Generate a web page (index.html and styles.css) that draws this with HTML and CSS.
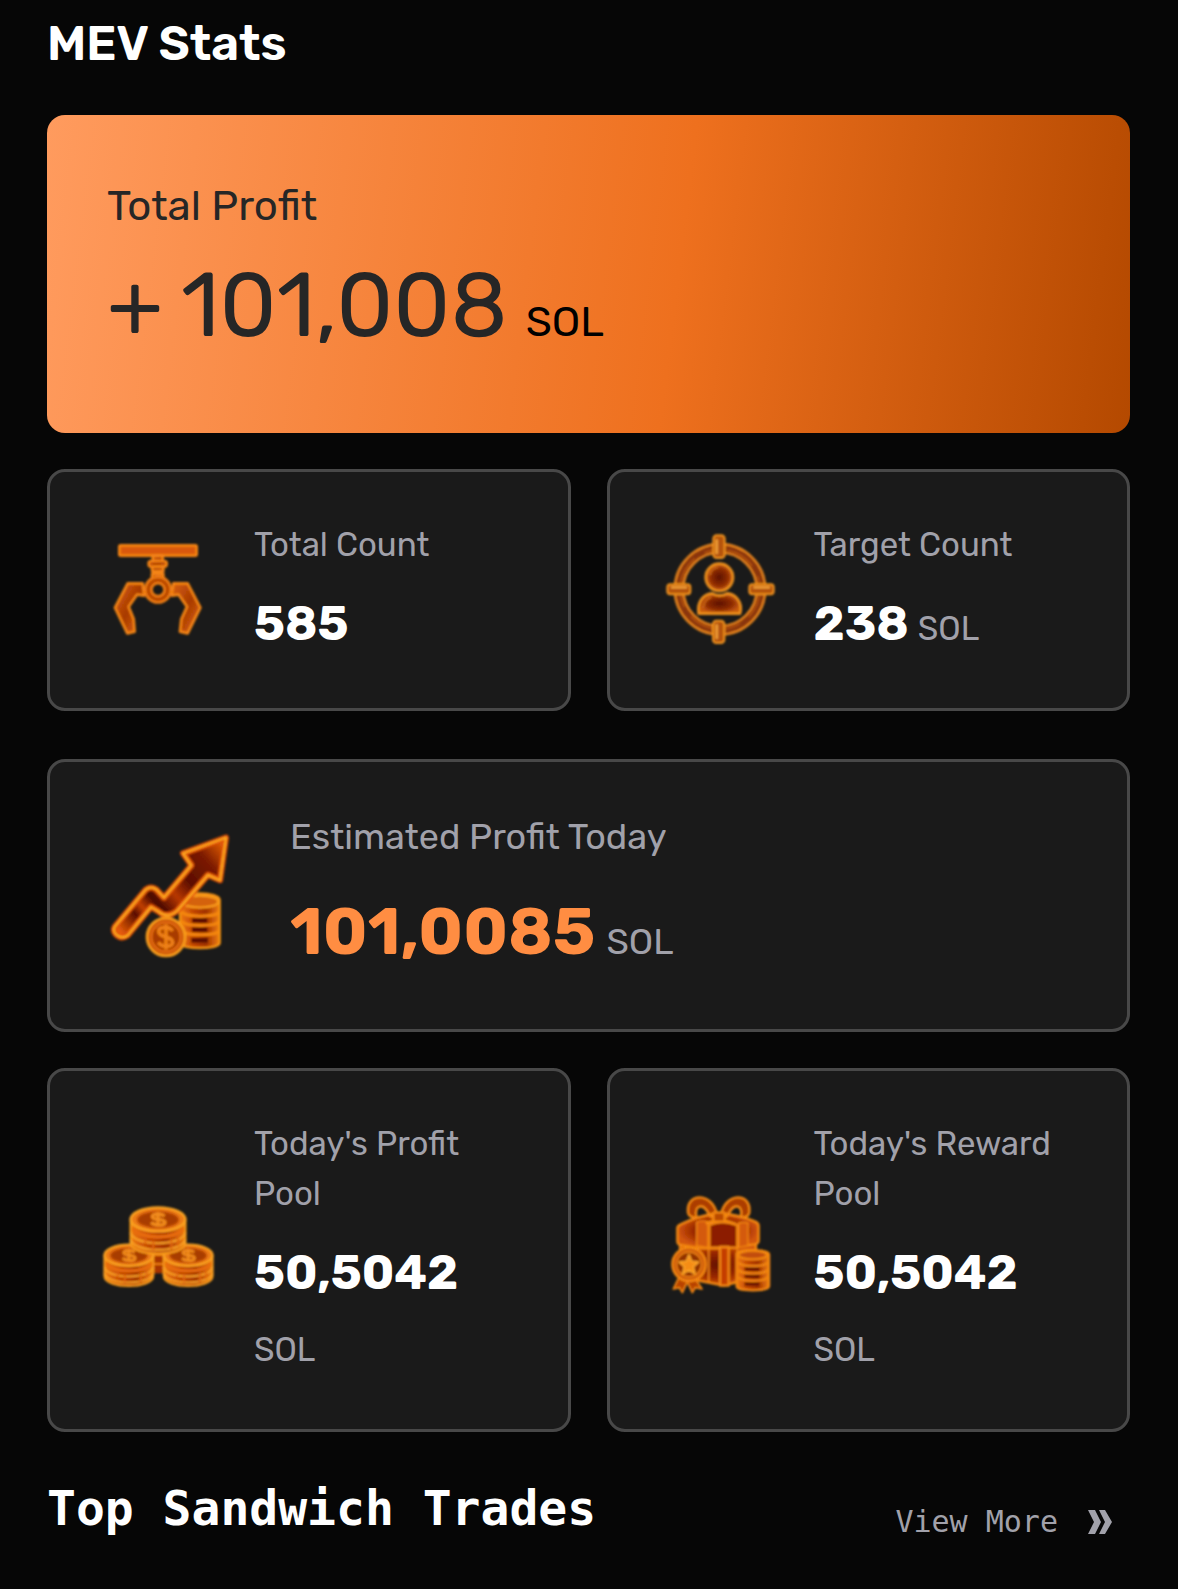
FILE: index.html
```html
<!DOCTYPE html>
<html lang="en">
<head>
<meta charset="utf-8">
<meta name="viewport" content="width=device-width, initial-scale=1">
<title>MEV Stats</title>
<link rel="stylesheet" href="styles.css">
</head>
<body>
<svg class="defs" aria-hidden="true">
  <defs>
    <linearGradient id="ember" x1="0" y1="0" x2="1" y2="1">
      <stop offset="0" stop-color="#d9620c"/><stop offset=".5" stop-color="#a83a04"/><stop offset="1" stop-color="#e06a0c"/>
    </linearGradient>
    <linearGradient id="lava" x1="0" y1="0" x2="1" y2="0">
      <stop offset="0" stop-color="#ee7a0c"/><stop offset=".35" stop-color="#c04404"/><stop offset=".65" stop-color="#a03002"/><stop offset="1" stop-color="#f0800c"/>
    </linearGradient>
    <radialGradient id="core">
      <stop offset="0" stop-color="#5c1200"/><stop offset=".6" stop-color="#8e2c04"/><stop offset="1" stop-color="#c85a0c"/>
    </radialGradient>
    <radialGradient id="box">
      <stop offset="0" stop-color="#641000"/><stop offset=".6" stop-color="#9a2802"/><stop offset="1" stop-color="#d2560a"/>
    </radialGradient>
    <linearGradient id="arrow" gradientUnits="userSpaceOnUse" x1="60" y1="320" x2="370" y2="50">
      <stop offset="0" stop-color="#e65c08"/><stop offset=".17" stop-color="#5a0e00"/><stop offset=".24" stop-color="#c24004"/><stop offset=".34" stop-color="#480800"/><stop offset=".48" stop-color="#b83804"/><stop offset=".62" stop-color="#5c0e00"/><stop offset=".82" stop-color="#7c1a00"/><stop offset="1" stop-color="#e86208"/>
    </linearGradient>
    <filter id="soft" x="-10%" y="-10%" width="120%" height="120%"><feGaussianBlur stdDeviation="3"/></filter>
    <symbol id="coins" viewBox="0 0 176 148" overflow="visible">
      <path d="M6 42v68c0 44 164 44 164 0V42z" fill="url(#lava)" stroke="#f79a1c" stroke-width="7"/>
      <path d="M6 80c8 42 156 42 164 0M6 100c8 42 156 42 164 0" fill="none" stroke="#fba428" stroke-width="6"/>
      <path d="M12 66c18 36 134 36 152 0" fill="none" stroke="#e86c0c" stroke-width="11"/>
      <path d="M50 98v14M74 104v28M128 98v32M148 90v30" stroke="#e0660c" stroke-width="6"/>
      <ellipse cx="88" cy="40" rx="82" ry="36" fill="#ec7c12" stroke="#fca422" stroke-width="7"/>
      <ellipse cx="88" cy="41" rx="62" ry="25" fill="#a83c04" stroke="#cc5408" stroke-width="5"/>
      <path d="M108 30c-12-9-37-7-37 2 0 11 38 5 38 17 0 11-29 11-42 1M88 18v44" fill="none" stroke="#f28c1a" stroke-width="10"/>
    </symbol>
  </defs>
</svg>
<main class="page">
  <h1 class="title">MEV Stats</h1>

  <section class="hero">
    <h2 class="hero-label">Total Profit</h2>
    <p class="hero-value"><span>+</span><span>101,008</span><span class="hero-unit">SOL</span></p>
  </section>

  <div class="pair pair-top">
    <section class="card">
      <svg class="icon" viewBox="-6 0 360 360" aria-hidden="true">
        <g filter="url(#soft)" fill="url(#ember)" stroke="#f48414" stroke-width="8" stroke-linejoin="round">
          <rect x="58" y="46" width="232" height="31" rx="4" fill="#d9580a"/>
          <path d="M158 77h30v16h-30zM156 110h34v14h-34zM156 132h34v14h-34z"/>
          <rect x="146" y="93" width="54" height="17" rx="7"/>
          <path d="M128 160H83l-38 73 37 77 22-5-3-38-15-37 25-36 22 3z"/>
          <path d="M220 160h43l38 73-38 77-23-5 4-38 17-37-25-36-21 3z"/>
          <circle cx="174" cy="179" r="29" fill="none" stroke="#ee7c12" stroke-width="27"/>
          <circle cx="174" cy="179" r="29" fill="none" stroke="#b94606" stroke-width="11"/>
        </g>
      </svg>
      <div class="info">
        <h2 class="label">Total Count</h2>
        <p class="value">585</p>
      </div>
    </section>
    <section class="card">
      <svg class="icon" viewBox="9 15 360 360" aria-hidden="true">
        <g filter="url(#soft)" fill="none" stroke-linejoin="round">
          <circle cx="195" cy="193" r="123" stroke="#e4821c" stroke-width="33"/>
          <circle cx="195" cy="193" r="123" stroke="#8a340a" stroke-width="19"/>
          <circle cx="195" cy="193" r="119" stroke="#b4530e" stroke-width="5" stroke-dasharray="90 34 50 20"/>
          <g fill="#b4520d" stroke="#f0921e" stroke-width="6">
            <rect x="175" y="31" width="34" height="68" rx="10"/>
            <rect x="174" y="287" width="34" height="67" rx="10"/>
            <rect x="37" y="178" width="69" height="30" rx="9"/>
            <rect x="283" y="178" width="73" height="30" rx="9"/>
          </g>
          <path d="M185 43v44M185 298v44M48 187h48M295 187h50" stroke="#f6a63a" stroke-width="7"/>
          <circle cx="193" cy="157" r="41" fill="url(#core)" stroke="#ee901e" stroke-width="8"/>
          <path d="M131 266c-7-39 18-60 41-61 14 8 30 8 44 0 24 1 49 26 39 61z" fill="url(#core)" stroke="#ee901e" stroke-width="8"/>
          <path d="M164 150c3-15 14-23 26-23M144 250c2-18 12-30 25-34" stroke="#c86418" stroke-width="6"/>
        </g>
      </svg>
      <div class="info">
        <h2 class="label">Target Count</h2>
        <p class="value"><span class="amount">238</span><wbr><span class="unit">SOL</span></p>
      </div>
    </section>
  </div>

  <section class="card card-wide">
    <svg class="icon icon-large" viewBox="-6 -3 432 432" aria-hidden="true">
      <g filter="url(#soft)" stroke-linejoin="round" fill="none">
        <path d="M240 225c0-26 119-26 119 0v128c0 22-119 22-119 0z" fill="url(#lava)" stroke="#f79414" stroke-width="7"/>
        <ellipse cx="300" cy="230" rx="55" ry="18" fill="#d4620a" stroke="#fa9c1c" stroke-width="7"/>
        <path d="M245 260c12 18 102 18 114 0M245 288c12 18 102 18 114 0M245 316c12 18 102 18 114 0" stroke="#f6880e" stroke-width="9"/>
        <path d="M276 286h46M276 314h46M274 346h50" stroke="#5c1000" stroke-width="14"/>
        <path d="M45 304L137 194q16-13 33 0l22 24 82-97-25-36 129-47-18 128-36-16-93 108q-29 24-55 2l-23-14-70 85q-20 14-37-5-8-10-1-22z" fill="url(#arrow)" stroke="#e25208" stroke-width="18"/>
        <path d="M45 304L137 194q16-13 33 0l22 24 82-97-25-36 129-47-18 128-36-16-93 108q-29 24-55 2l-23-14-70 85q-20 14-37-5-8-10-1-22z" stroke="#ffb020" stroke-width="6"/>
        <circle cx="198" cy="336" r="57" fill="#cc560a" stroke="#fa9e1c" stroke-width="8"/>
        <circle cx="198" cy="336" r="43" fill="#a83a05" stroke="#e8700c" stroke-width="5"/>
        <path d="M218 318c-11-16-41-13-42 1 0 20 42 14 42 33 0 15-32 17-43 0M198 298v76" stroke="#ee8012" stroke-width="11"/>
      </g>
    </svg>
    <div class="info">
      <h2 class="label">Estimated Profit Today</h2>
      <p class="value"><span class="amount">101,0085</span><wbr><span class="unit">SOL</span></p>
    </div>
  </section>

  <div class="pair">
    <section class="card">
      <svg class="icon" viewBox="24 0 360 360" aria-hidden="true">
        <g filter="url(#soft)">
          <path d="M180 170h50v80h-50z" fill="#a83404"/>
          <path d="M190 195h34M190 222h34" stroke="#ec7a10" stroke-width="6"/>
          <use href="#coins" x="38" y="157" width="157" height="138"/>
          <use href="#coins" x="216" y="157" width="157" height="138"/>
          <use href="#coins" x="116" y="48" width="176" height="148"/>
        </g>
      </svg>
      <div class="info">
        <h2 class="label">Today's Profit Pool</h2>
        <p class="value"><span class="amount">50,5042</span><wbr><span class="unit">SOL</span></p>
      </div>
    </section>
    <section class="card">
      <svg class="icon" viewBox="-6 15 360 360" aria-hidden="true">
        <g filter="url(#soft)" fill="none" stroke="#f48812" stroke-width="7" stroke-linejoin="round">
          <path d="M172 92C160 20 76 20 84 84q4 14 26 14c-8-40 20-46 38-8z" fill="#ac3e06"/>
          <path d="M182 92C194 20 276 20 268 84q-4 14-26 14c8-40-20-46-38-8z" fill="#ac3e06"/>
          <path d="M60 176h228v100l-96 26-132-26z" fill="url(#box)"/>
          <path d="M62 118q46-24 112-34 70 6 112 26 10 4 10 14v42q0 10-12 12l-96 12H120l-58-10q-10-2-10-12v-38q0-8 10-12z" fill="url(#box)"/>
          <path d="M110 112q10-8 34-2v78l-34-6zM236 114q16-4 28 0v68l-28 6z" fill="#d45a0a" stroke-width="4"/>
          <path d="M148 120q36-18 84 0v68h-84z" fill="#8c1e02"/>
          <path d="M180 186h26v116h-26z" fill="#c43c06"/>
          <path d="M146 188v106M232 188v92M110 182v60" stroke-width="5"/>
          <path d="M148 92l80 26M204 92l-66 24" stroke-width="9"/>
          <rect x="160" y="82" width="34" height="28" rx="6" fill="#b84806"/>
          <path d="M230 208c0-17 97-17 97 0v96c0 16-97 16-97 0z" fill="url(#lava)"/>
          <ellipse cx="278" cy="210" rx="43" ry="13" fill="#c24e08"/>
          <path d="M236 233c10 14 76 14 86 0M236 255c10 14 76 14 86 0M236 277c10 14 76 14 86 0"/>
          <path d="M254 252h44M254 274h44M254 297h44" stroke="#6a1602" stroke-width="10"/>
          <path d="M56 278l-16 34 18-4 9 15 18-38zM104 278l22 34-20-4-9 15-18-38z" fill="#b84306" stroke-width="5"/>
          <circle cx="87" cy="238" r="50" fill="#cc5a0a"/>
          <circle cx="87" cy="238" r="37" fill="#923005" stroke-width="4"/>
          <path d="M87 209l8 20 21 2-16 14 5 22-18-12-19 12 5-22-16-14 22-2z" fill="#f48c18" stroke="#fba428" stroke-width="5"/>
        </g>
      </svg>
      <div class="info">
        <h2 class="label">Today's Reward Pool</h2>
        <p class="value"><span class="amount">50,5042</span><wbr><span class="unit">SOL</span></p>
      </div>
    </section>
  </div>

  <div class="trades">
    <h2 class="trades-title">Top Sandwich Trades</h2>
    <a class="more" href="#">View More
      <svg class="chevrons" viewBox="0 0 24 24" aria-hidden="true"><path d="M0 0h7l6 12-6 12H0l6-12zM11 0h6l7 12-7 12h-6l6-12z"/></svg>
    </a>
  </div>
</main>
</body>
</html>
```
FILE: styles.css
```css
* { box-sizing: border-box; margin: 0; }

body {
  background: #060606;
  color: #fff;
  font-family: Rubik, Inter, sans-serif;
}

.defs { position: absolute; width: 0; height: 0; }

.page { padding: 8px 48px 24px 47px; }

.title {
  margin-bottom: 35px;
  font-size: 48px;
  font-weight: 600;
  line-height: 72px;
}

.hero {
  margin-bottom: 36px;
  padding: 60px;
  border-radius: 18px;
  background: linear-gradient(97deg, #ff9b5e 0%, #ee701e 58%, #b44900 100%);
  color: #262626;
}

.hero-label {
  font-size: 42px;
  font-weight: 400;
  line-height: 63px;
}

.hero-value {
  display: flex;
  align-items: baseline;
  gap: 18px;
  font-size: 90px;
  line-height: 135px;
}

.hero-unit { color: #000; font-size: 42px; line-height: 1; }

.pair {
  display: grid;
  grid-template-columns: 1fr 1fr;
  gap: 36px;
}

.pair-top { margin-bottom: 48px; }

.card {
  display: flex;
  align-items: center;
  gap: 36px;
  padding: 48px;
  border: 3px solid #484848;
  border-radius: 18px;
  background: #1a1a1a;
}

.icon { flex: none; width: 120px; height: 120px; }

.icon-large { width: 144px; height: 144px; }

.info { flex: 1; min-width: 0; }

.label {
  margin-bottom: 18px;
  color: #a1a1aa;
  font-size: 33px;
  font-weight: 400;
  line-height: 50px;
}

.value {
  font-size: 48px;
  font-weight: 700;
  line-height: 72px;
}

.amount { margin-right: 9px; }

.unit {
  color: #a1a1aa;
  font-size: 33px;
  font-weight: 400;
  line-height: 1;
}

.card-wide { gap: 48px; margin-bottom: 36px; }

.card-wide .label { font-size: 36px; line-height: 54px; }

.card-wide .value {
  color: #ff8d42;
  font-size: 66px;
  line-height: 99px;
}

.card-wide .amount { margin-right: 11px; }

.card-wide .unit { font-size: 36px; }

.trades {
  display: flex;
  align-items: flex-end;
  justify-content: space-between;
  margin-top: 40px;
  padding-right: 18px;
  font-family: "DejaVu Sans Mono", monospace;
}

.trades-title {
  font-size: 48px;
  font-weight: 700;
  line-height: 72px;
}

.more {
  display: flex;
  align-items: center;
  gap: 30px;
  color: #a1a1aa;
  font-size: 30px;
  line-height: 45px;
  text-decoration: none;
}

.chevrons { width: 24px; height: 24px; fill: currentColor; }
```
